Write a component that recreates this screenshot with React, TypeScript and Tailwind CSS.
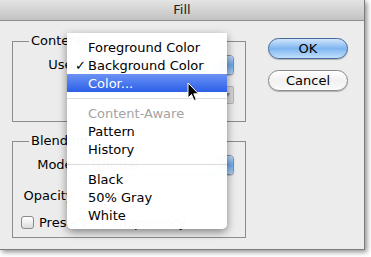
import React from "react";

const font = "font-['DejaVu_Sans',sans-serif]";

function Popup({ text }: { text?: string }) {
  return (
    <div className="flex h-[20px] flex-1 items-stretch overflow-hidden rounded-[4px] border border-[#7f8da6] bg-white shadow-[0_1px_1px_rgba(0,0,0,0.2)]">
      <div className="flex flex-1 items-center pl-[8px] text-[13px] text-black">{text}</div>
      <div className="flex w-[19px] items-center justify-center bg-gradient-to-b from-[#b9d4f2] via-[#6ea6e6] to-[#a9cdf3]">
        <svg width="7" height="11" viewBox="0 0 7 11">
          <path d="M0.5 4 L3.5 0.5 L6.5 4 Z M0.5 7 L3.5 10.5 L6.5 7 Z" fill="#1b2b44" />
        </svg>
      </div>
    </div>
  );
}

export default function App() {
  return (
    <div className={`relative h-[257px] w-[371px] overflow-hidden bg-white ${font}`}>
      <div className="flex h-[250px] w-[365px] flex-col border-r border-b border-[#7d7d7d] bg-[#ececec] shadow-[2px_2px_5px_rgba(0,0,0,0.45)]">
        <div className="flex h-[21px] items-center justify-center border-b border-[#8e8e8e] bg-gradient-to-b from-[#e4e4e4] to-[#c3c3c3] text-[13px] text-[#222]">
          Fill
        </div>
        <div className="flex pl-[12px] pt-[12px]">
          <div className="flex w-[234px] flex-col">
            <fieldset className="h-[89px] border border-[#8c8c8c]">
              <legend className="ml-[16px] px-[2px] text-[13px] leading-[16px] text-black">Contents</legend>
              <div className="mt-[6px] flex items-center pr-[11px]">
                <div className="w-[64px] text-right text-[13px]">Use:</div>
                <div className="ml-[6px] flex flex-1">
                  <Popup text="Background Color" />
                </div>
              </div>
              <div className="mt-[11px] flex justify-end pr-[11px]">
                <div className="flex h-[18px] w-[44px] items-center justify-end rounded-[2px] border border-[#b5b5b5] bg-[#d6d6d6] pr-[3px] text-[8px] text-[#888]">
                  ▾
                </div>
              </div>
            </fieldset>
            <fieldset className="mt-[11px] h-[105px] border border-[#8c8c8c]">
              <legend className="ml-[16px] px-[2px] text-[13px] leading-[16px] text-black">Blending</legend>
              <div className="mt-[6px] flex items-center pr-[11px]">
                <div className="w-[64px] text-right text-[13px]">Mode:</div>
                <div className="ml-[6px] flex flex-1">
                  <Popup text="Normal" />
                </div>
              </div>
              <div className="mt-[11px] flex items-center">
                <div className="w-[64px] text-right text-[13px]">Opacity:</div>
                <div className="ml-[6px] h-[19px] w-[40px] border border-[#999] bg-white text-[13px]">100</div>
                <div className="ml-[4px] text-[13px]">%</div>
              </div>
              <div className="mt-[7px] flex items-center pl-[8px]">
                <div className="h-[13px] w-[13px] rounded-[3px] border border-[#8a8a8a] bg-gradient-to-b from-white to-[#dcdcdc]" />
                <div className="ml-[5px] text-[13px]">Preserve Transparency</div>
              </div>
            </fieldset>
          </div>
          <div className="ml-[22px] flex flex-col">
            <div className="mt-[5px] flex h-[21px] w-[80px] items-center justify-center rounded-full border border-[#47689a] bg-gradient-to-b from-[#d0e5fb] via-[#7fb6ef] to-[#c0dffb] text-[13px] text-black shadow-[0_1px_1px_rgba(0,0,0,0.25)]">
              OK
            </div>
            <div className="mt-[11px] flex h-[21px] w-[80px] items-center justify-center rounded-full border border-[#8a8a8a] bg-gradient-to-b from-white via-[#f1f1f1] to-[#fafafa] text-[13px] text-black shadow-[0_1px_1px_rgba(0,0,0,0.25)]">
              Cancel
            </div>
          </div>
        </div>
      </div>

      {/* Popup menu */}
      <div className="absolute left-[67px] top-[33px] flex w-[160px] flex-col rounded-b-[5px] bg-white/[0.98] py-[5px] text-[13px] shadow-[0_3px_8px_rgba(0,0,0,0.45)]">
        <div className="flex h-[18px] items-center pl-[21px] pt-px text-black">Foreground Color</div>
        <div className="relative flex h-[18px] items-center pl-[21px] pt-px text-black">
          <span className="absolute left-[8px]">✓</span>
          Background Color
        </div>
        <div className="flex h-[18px] items-center bg-gradient-to-b from-[#6b92f3] to-[#2d5ee8] pl-[21px] pt-px text-white">Color...</div>
        <div className="mb-[5px] mt-[6px] h-px bg-[#dcdcdc]" />
        <div className="flex h-[18px] items-center pl-[21px] pt-px text-[#a3a3a3]">Content-Aware</div>
        <div className="flex h-[18px] items-center pl-[21px] pt-px text-black">Pattern</div>
        <div className="flex h-[18px] items-center pl-[21px] pt-px text-black">History</div>
        <div className="mb-[5px] mt-[6px] h-px bg-[#dcdcdc]" />
        <div className="flex h-[18px] items-center pl-[21px] pt-px text-black">Black</div>
        <div className="flex h-[18px] items-center pl-[21px] pt-px text-black">50% Gray</div>
        <div className="flex h-[18px] items-center pl-[21px] pt-px text-black">White</div>
      </div>

      {/* Cursor */}
      <svg className="absolute left-[187px] top-[82px]" width="13" height="21" viewBox="0 0 13 21">
        <path d="M1 1 L1 16 L4.5 12.5 L7 18.5 L9.3 17.5 L6.8 11.8 L11.5 11.8 Z" fill="#000" stroke="#fff" strokeWidth="1" strokeLinejoin="round" />
      </svg>
    </div>
  );
}
